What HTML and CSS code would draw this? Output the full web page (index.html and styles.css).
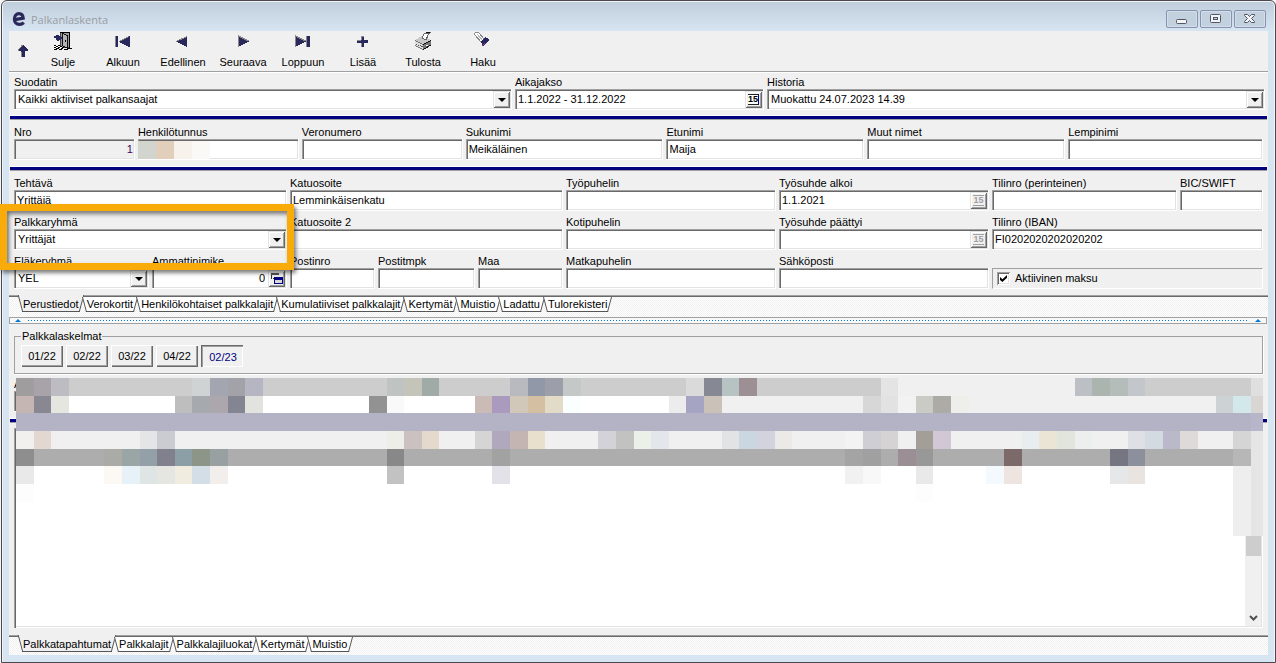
FILE: index.html
```html
<!DOCTYPE html>
<html lang="fi">

<head>
    <meta charset="UTF-8">
    <meta name="viewport" content="width=device-width, initial-scale=1.0">
    <link rel="stylesheet" href="styles.css">
    <title>Palkanlaskenta</title>
</head>

<body>
    <div class="window">
        <div class="titlebar">
            <svg class="logo" width="14" height="16" viewBox="0 0 14 16">
                <path d="M3 8.6 L11.2 7.2 C11 4.6 9.4 2.6 7 2.6 C4.2 2.6 2.4 5 2.4 8 C2.4 11.2 4.4 13.4 7.4 13.4 C9.2 13.4 10.6 12.8 11.8 11.6" fill="none" stroke="#28285a" stroke-width="3.2" />
            </svg>
            <h1>Palkanlaskenta</h1>
            <div class="winbuttons">
                <button aria-label="Pienennä">
                    <svg width="16" height="12" viewBox="0 0 16 12"><rect x="2.500" y="6.500" width="10" height="4" rx="1" fill="#f4f4f4" stroke="#4f5666" /></svg>
                </button>
                <button aria-label="Suurenna">
                    <svg width="16" height="12" viewBox="0 0 16 12"><rect x="2.500" y="1.500" width="10" height="8" rx="1" fill="#f4f4f4" stroke="#4f5666" /><rect x="5.500" y="4.500" width="4" height="2" fill="#c3d0de" stroke="#4f5666" /></svg>
                </button>
                <button aria-label="Sulje ikkuna">
                    <svg width="16" height="12" viewBox="0 0 16 12"><path d="M2.500 1.500h3L7.500 3.500l2-2h3v1L9.500 5.500l3 3v1h-3l-2-2-2 2h-3v-1l3-3-3-3z" fill="#f4f4f4" stroke="#4f5666" /></svg>
                </button>
            </div>
        </div>

        <div class="client">
            <div class="toolbar">
                <button class="up" aria-label="Ylös">
                    <svg width="12" height="14" viewBox="0 0 12 14"><path d="M6 0l5 6v1H8v6H4V7H1V6z" fill="#28285a" /><path d="M5.500 1L1 6.500M4 8v5" stroke="#888" fill="none" /></svg>
                </button>
                <button>
                    <svg width="20" height="20" viewBox="0 0 20 20">
                        <path d="M7 1h10v16H7z" fill="#444" />
                        <path d="M8 2h8v14H8z" fill="#9a9a9a" />
                        <path d="M9.500 2.500l5 2v13l-5-3z" fill="#b4b4b4" stroke="#111" />
                        <path d="M16.500 1v16M7 1.500h10" stroke="#000" fill="none" />
                        <path d="M12 9h1v2h-1z" fill="#000" />
                        <path d="M1 5h2V4h3v1h2v1h1v2H8v1H6v1H4V9H3V7H1z" fill="#28285a" />
                        <path d="M1 14.500h2m2 0h2M3 15.500h2m2 0h2M1 16.500h2m2 0h2m2 0h2M3 17.500h3m2 0h2m4 0h5M1 18.500h3m2 0h3m2 0h4" stroke="#000" />
                        <path d="M3 14.500h2M1 15.500h2m2 0h2M3 16.500h2m2 0h2" stroke="#fff" />
                    </svg>
                    Sulje
                </button>
                <button>
                    <svg width="20" height="20" viewBox="0 0 20 20"><path d="M2 5h2v11H2z" fill="#888" /><path d="M3 5h2v11H3zM17 5v11h-1L6 11v-1L16 5z" fill="#28285a" /><path d="M16 5.500L6 10.500" stroke="#888" /></svg>
                    Alkuun
                </button>
                <button>
                    <svg width="20" height="20" viewBox="0 0 20 20"><path d="M14 5v11L3 10.500z" fill="#28285a" /><path d="M14 5.500L3 10.500" stroke="#888" /></svg>
                    Edellinen
                </button>
                <button>
                    <svg width="20" height="20" viewBox="0 0 20 20"><path d="M5 5v11l11-5.500z" fill="#28285a" /><path d="M5.500 16V5l10 5" stroke="#888" fill="none" /></svg>
                    Seuraava
                </button>
                <button>
                    <svg width="20" height="20" viewBox="0 0 20 20"><path d="M2 5v11l11-5.500zM14 5h3v11h-3z" fill="#28285a" /><path d="M2.500 16V5l10 5M13.500 5v11" stroke="#888" fill="none" /></svg>
                    Loppuun
                </button>
                <button>
                    <svg width="20" height="20" viewBox="0 0 20 20"><path d="M8 5h3v4h4v3h-4v4H8v-4H4V9h4z" fill="#28285a" /><path d="M8.500 9V5h2M4 9.500h4M8.500 12v4" stroke="#888" fill="none" /></svg>
                    Lisää
                </button>
                <button>
                    <svg width="20" height="20" viewBox="0 0 20 20">
                        <path d="M2 9l7-4 9 4v5l-8 5-8-4z" fill="#777" />
                        <path d="M2 9l7-4 9 4-8 4z" fill="#c8c8c8" />
                        <path d="M2 10l8 4v4l-8-4z" fill="#ddd" />
                        <path d="M9 7l2-4 6-1-2 2-2 5z" fill="#fff" stroke="#666" />
                        <path d="M10 18.500l8-4.500M10 13.500l8-4M13 2l4-1" stroke="#111" />
                        <path d="M3 13l7 3" stroke="#555" stroke-dasharray="1 1" />
                        <path d="M13 14h2" stroke="#fff" />
                    </svg>
                    Tulosta
                </button>
                <button>
                    <svg width="20" height="20" viewBox="0 0 20 20">
                        <path d="M1 3l2-2h2l7 8-3 3z" fill="#fff" stroke="#888" />
                        <path d="M4 3l6 7" stroke="#bbb" />
                        <path d="M7 11l5-5 4 2v1l-6 6H9v-2z" fill="#28285a" />
                        <path d="M9 14.500l3-2" stroke="#a03a8a" />
                    </svg>
                    Haku
                </button>
            </div>

            <div class="row filters">
                <div class="cell">
                    <label for="suodatin">Suodatin</label>
                    <div class="box">
                        <select id="suodatin"><option>Kaikki aktiiviset palkansaajat</option></select>
                        <span class="drop"></span>
                    </div>
                </div>
                <div class="cell">
                    <label for="aikajakso">Aikajakso</label>
                    <div class="box">
                        <input type="text" id="aikajakso" value="1.1.2022 - 31.12.2022">
                        <button class="cal" aria-label="Valitse aikajakso"><span>15</span></button>
                    </div>
                </div>
                <div class="cell">
                    <label for="historia">Historia</label>
                    <div class="box">
                        <select id="historia"><option>Muokattu 24.07.2023 14.39</option></select>
                        <span class="drop"></span>
                    </div>
                </div>
            </div>

            <div class="bar"></div>

            <div class="row person">
                <div class="cell">
                    <label for="nro">Nro</label>
                    <div class="box readonly"><input type="text" id="nro" class="right" value="1" readonly></div>
                </div>
                <div class="cell">
                    <label for="hetu">Henkilötunnus</label>
                    <div class="box"><input type="text" id="hetu"></div>
                    <div class="hide"><i class="h1"></i><i class="h2"></i><i class="h3"></i><i class="h4"></i></div>
                </div>
                <div class="cell">
                    <label for="veronumero">Veronumero</label>
                    <div class="box"><input type="text" id="veronumero"></div>
                </div>
                <div class="cell">
                    <label for="sukunimi">Sukunimi</label>
                    <div class="box"><input type="text" id="sukunimi" value="Meikäläinen"></div>
                </div>
                <div class="cell">
                    <label for="etunimi">Etunimi</label>
                    <div class="box"><input type="text" id="etunimi" value="Maija"></div>
                </div>
                <div class="cell">
                    <label for="muut">Muut nimet</label>
                    <div class="box"><input type="text" id="muut"></div>
                </div>
                <div class="cell">
                    <label for="lempinimi">Lempinimi</label>
                    <div class="box"><input type="text" id="lempinimi"></div>
                </div>
            </div>

            <div class="bar"></div>

            <div class="row details">
                <div class="cell two">
                    <label for="tehtava">Tehtävä</label>
                    <div class="box"><input type="text" id="tehtava" value="Yrittäjä"></div>
                </div>
                <div class="cell three">
                    <label for="katu">Katuosoite</label>
                    <div class="box"><input type="text" id="katu" value="Lemminkäisenkatu"></div>
                </div>
                <div class="cell">
                    <label for="tyopuhelin">Työpuhelin</label>
                    <div class="box"><input type="text" id="tyopuhelin"></div>
                </div>
                <div class="cell">
                    <label for="alkoi">Työsuhde alkoi</label>
                    <div class="box">
                        <input type="text" id="alkoi" value="1.1.2021">
                        <button class="cal off" aria-label="Valitse alkupäivä" disabled><span>15</span></button>
                    </div>
                </div>
                <div class="cell">
                    <label for="tilinro">Tilinro (perinteinen)</label>
                    <div class="box"><input type="text" id="tilinro"></div>
                </div>
                <div class="cell">
                    <label for="bic">BIC/SWIFT</label>
                    <div class="box"><input type="text" id="bic"></div>
                </div>

                <div class="cell two">
                    <label for="palkkaryhma">Palkkaryhmä</label>
                    <div class="box">
                        <select id="palkkaryhma"><option>Yrittäjät</option></select>
                        <span class="drop"></span>
                    </div>
                    <div class="highlight"></div>
                </div>
                <div class="cell three">
                    <label for="katu2">Katuosoite 2</label>
                    <div class="box"><input type="text" id="katu2"></div>
                </div>
                <div class="cell">
                    <label for="kotipuhelin">Kotipuhelin</label>
                    <div class="box"><input type="text" id="kotipuhelin"></div>
                </div>
                <div class="cell">
                    <label for="paattyi">Työsuhde päättyi</label>
                    <div class="box">
                        <input type="text" id="paattyi">
                        <button class="cal off" aria-label="Valitse loppupäivä" disabled><span>15</span></button>
                    </div>
                </div>
                <div class="cell two">
                    <label for="iban">Tilinro (IBAN)</label>
                    <div class="box"><input type="text" id="iban" value="FI0202020202020202"></div>
                </div>

                <div class="cell">
                    <label for="elakeryhma">Eläkeryhmä</label>
                    <div class="box">
                        <select id="elakeryhma"><option>YEL</option></select>
                        <span class="drop"></span>
                    </div>
                </div>
                <div class="cell">
                    <label for="ammatti">Ammattinimike</label>
                    <div class="box">
                        <input type="text" id="ammatti" class="right" value="0">
                        <button class="pick" aria-label="Valitse ammattinimike">
                            <svg width="13" height="13" viewBox="0 0 13 13"><path d="M1 1h8v2H1z" fill="#555" /><path d="M1 3h1v4H1zM3 6h1v1H3z" fill="#333" /><path d="M4 5h9v7H4z" fill="#000080" /><path d="M5 8h7v3H5z" fill="#d8d8d8" /></svg>
                        </button>
                    </div>
                </div>
                <div class="cell">
                    <label for="postinro">Postinro</label>
                    <div class="box"><input type="text" id="postinro"></div>
                </div>
                <div class="cell">
                    <label for="postitmpk">Postitmpk</label>
                    <div class="box"><input type="text" id="postitmpk"></div>
                </div>
                <div class="cell">
                    <label for="maa">Maa</label>
                    <div class="box"><input type="text" id="maa"></div>
                </div>
                <div class="cell">
                    <label for="matkapuhelin">Matkapuhelin</label>
                    <div class="box"><input type="text" id="matkapuhelin"></div>
                </div>
                <div class="cell">
                    <label for="email">Sähköposti</label>
                    <div class="box"><input type="text" id="email"></div>
                </div>
                <div class="cell two bottom">
                    <div class="checkpanel">
                        <input type="checkbox" id="aktiivinen" checked>
                        <label for="aktiivinen">Aktiivinen maksu</label>
                    </div>
                </div>
            </div>

            <div class="tabs">
                <button class="active"><span>Perustiedot</span></button>
                <button><span>Verokortit</span></button>
                <button><span>Henkilökohtaiset palkkalajit</span></button>
                <button><span>Kumulatiiviset palkkalajit</span></button>
                <button><span>Kertymät</span></button>
                <button><span>Muistio</span></button>
                <button><span>Ladattu</span></button>
                <button><span>Tulorekisteri</span></button>
            </div>

            <div class="splitter"><i class="tri"></i><i class="dots"></i><i class="tri"></i></div>

            <fieldset class="periods">
                <legend>Palkkalaskelmat</legend>
                <button>01/22</button>
                <button>02/22</button>
                <button>03/22</button>
                <button>04/22</button>
                <button class="pressed">02/23</button>
            </fieldset>

            <div class="events">
                <div class="row single">
                    <div class="cell">
                        <label for="rivi">A</label>
                        <div class="box"><input type="text" id="rivi"></div>
                    </div>
                </div>
                <div class="bar"></div>
                <div class="list">
                    <div class="scroll">
                        <div class="thumb"></div>
                        <svg width="9" height="6" viewBox="0 0 9 6"><path d="M1 1l3.500 3.500L8 1" fill="none" stroke="#505050" stroke-width="2" /></svg>
                    </div>
                </div>
                <svg id="mosaic" class="mosaic" viewBox="0 0 70.680 8.950" preserveAspectRatio="none"></svg>
            </div>

            <div class="tabs low">
                <button class="active"><span>Palkkatapahtumat</span></button>
                <button><span>Palkkalajit</span></button>
                <button><span>Palkkalajiluokat</span></button>
                <button><span>Kertymät</span></button>
                <button><span>Muistio</span></button>
            </div>
        </div>
    </div>

    <script src="mosaic.js"></script>
</body>

</html>
```

FILE: styles.css
```css
* {
    box-sizing: border-box;
    margin: 0;
    padding: 0;
}

body {
    height: 100vh;
    padding-left: 1px;
    background-color: #f4f4f4;
    font-family: "Liberation Sans", Arial, sans-serif;
    font-size: 11px;
    line-height: 13px;
    color: black;
}

button,
input,
select {
    font: inherit;
    color: inherit;
    border: none;
    background: none;
    outline: none;
}

.window {
    height: 100%;
    min-height: 560px;
    display: flex;
    flex-direction: column;
    padding: 0 7px 7px 7px;
    border: 1px solid #4b484e;
    border-radius: 6px 6px 0 0;
    background: linear-gradient(#c0cddb, #d7e4f2 30px);
    box-shadow: inset 0 1px #f0f4f8, inset 1px 0 #f0f4f8, inset -1px 0 #f0f4f8;
}

.titlebar {
    height: 30px;
    flex: none;
    display: flex;
    align-items: center;
    padding: 6px 2px 0 3px;
}

.titlebar h1 {
    flex: 1;
    margin-left: 5px;
    font-family: "Open Sans", "Noto Sans", sans-serif;
    font-size: 11px;
    font-weight: normal;
    color: #999da3;
}

.winbuttons {
    display: flex;
    gap: 2px;
}

.winbuttons button {
    width: 32px;
    height: 18px;
    display: flex;
    align-items: center;
    justify-content: center;
    border: 1px solid #8493b0;
    border-radius: 2px;
    background-color: #c3d0de;
    box-shadow: inset 0 0 0 1px #d3deea;
}

.client {
    flex: 1;
    display: flex;
    flex-direction: column;
    background-color: #f0f0f0;
}

/* toolbar */
.toolbar {
    height: 42px;
    flex: none;
    display: flex;
    border-bottom: 1px solid white;
    box-shadow: inset 0 -1px #a0a0a0;
}

.toolbar button {
    width: 60px;
    display: flex;
    flex-direction: column;
    align-items: center;
    gap: 5px;
}

.toolbar svg {
    shape-rendering: crispEdges;
}

.toolbar .up {
    width: 24px;
    padding: 13px 0 0 3px;
}

/* fields */
.row {
    flex: none;
    display: grid;
    gap: 5px 3px;
    padding: 6px 5px;
}

.filters {
    grid-template-columns: 498fr 249fr 498fr;
    padding: 3px 3px 5px 5px;
}

.person {
    grid-template-columns: 121fr 161fr 161fr 198fr 198fr 198fr 195fr;
}

.details {
    grid-template-columns: 135fr 135fr 85fr 97fr 85fr 210fr 210fr 185fr 83fr;
}

.cell {
    position: relative;
    min-width: 0;
}

.cell label {
    display: block;
    height: 13px;
    white-space: nowrap;
}

.two {
    grid-column: span 2;
}

.three {
    grid-column: span 3;
}

.box {
    height: 21px;
    display: flex;
    padding: 2px 1px 1px 2px;
    border-right: 1px solid white;
    border-bottom: 1px solid white;
    background-color: white;
    box-shadow: inset 1px 1px #a0a0a0, inset 2px 2px #696969, inset -1px -1px #e3e3e3;
}

.box input,
.box select {
    flex: 1;
    min-width: 0;
    width: 100%;
    height: 16px;
    padding: 0 1px;
    appearance: none;
}

.box select {
    padding-left: 2px;
}

.box .right {
    padding-right: 0;
    text-align: right;
}

.readonly {
    background-color: #f0f0f0;
    color: #400060;
}

.drop,
.cal,
.pick {
    width: 17px;
    height: 17px;
    flex: none;
    display: flex;
    align-items: center;
    justify-content: center;
    background-color: #f0f0f0;
    box-shadow: inset 1px 1px #e3e3e3, inset -1px -1px #696969, inset 2px 2px white, inset -2px -2px #a0a0a0;
}

.drop::before {
    content: "";
    border: 4px solid transparent;
    border-top-color: black;
    border-bottom: none;
}

.cal span {
    width: 11px;
    height: 11px;
    border-top: 1px solid #222;
    border-bottom: 1px solid #222;
    border-right: 1px solid #000080;
    font-size: 9px;
    font-weight: bold;
    line-height: 9px;
    background-color: white;
}

.cal.off span {
    border-right: none;
    border-color: #a0a0a0;
    color: #a0a0a0;
    background-color: transparent;
}

.pick {
    margin-left: 3px;
}

.bar {
    flex: none;
    height: 5px;
    margin: 0 1px;
    border-top: 1px solid white;
    border-bottom: 1px solid #a0a0a0;
    background-color: #000080;
}

.hide {
    position: absolute;
    left: 0;
    bottom: 1px;
    height: 18px;
    display: flex;
}

.hide i {
    width: 18px;
}

.h1 {
    background-color: #d2d4ce;
}

.h2 {
    background-color: #e2cfbb;
}

.h3 {
    background-color: #f8f2ed;
}

.h4 {
    background-color: #fbf9f5;
}

.bottom {
    display: flex;
    align-items: flex-end;
}

.checkpanel {
    flex: 1;
    height: 21px;
    display: flex;
    align-items: center;
    gap: 5px;
    padding-left: 4px;
    border: 1px solid white;
    border-top-color: #a0a0a0;
    border-left-color: #a0a0a0;
}

.checkpanel input {
    appearance: none;
    width: 13px;
    height: 13px;
    background-color: white;
    box-shadow: inset 1px 1px #a0a0a0, inset -1px -1px white, inset 2px 2px #696969, inset -2px -2px #e3e3e3;
}

.checkpanel input:checked::before {
    content: "";
    display: block;
    width: 7px;
    height: 7px;
    margin: 3px;
    background-color: black;
    clip-path: polygon(0 30%, 35% 60%, 100% 0, 100% 40%, 35% 100%, 0 70%);
}

/* marker around the salary group */
.highlight {
    position: absolute;
    top: -12px;
    right: -7px;
    bottom: -20px;
    left: -14px;
    z-index: 2;
    border: 7px solid #f9ab0a;
    box-shadow: 2px 3px 4px rgba(0, 0, 0, 0.5), inset 2px 3px 4px rgba(0, 0, 0, 0.5);
    pointer-events: none;
}

/* tabs */
.tabs {
    flex: none;
    height: 22px;
    display: flex;
    align-items: flex-start;
    padding-left: 10px;
    border-top: 1px solid #a0a0a0;
    box-shadow: inset 0 1px #696969;
    background: repeating-conic-gradient(#f0f0f0 0 25%, white 0 50%) 0 0 / 2px 2px;
}

.tabs.low {
    height: 20px;
}

.tabs button {
    position: relative;
    height: 16px;
    padding: 0 4px;
}

.tabs button::before,
.tabs button::after {
    content: "";
    position: absolute;
    top: 1px;
    bottom: 0;
    background-color: white;
    border-bottom: 1px solid #555;
}

.tabs button::before {
    left: 1px;
    right: 45%;
    border-left: 1px solid #555;
    transform: skewX(15deg);
}

.tabs button::after {
    left: 45%;
    right: 1px;
    border-right: 1px solid #555;
    transform: skewX(-15deg);
}

.tabs .active::before,
.tabs .active::after {
    top: -1px;
    background-color: #f0f0f0;
}

.tabs span {
    position: relative;
    z-index: 1;
    white-space: nowrap;
}

.splitter {
    flex: none;
    height: 7px;
    margin: 0 1px 0 0;
    display: flex;
    align-items: center;
    gap: 7px;
    padding: 0 5px;
    border: 1px solid #a0a0a0;
    background-color: #f8f8f8;
}

.tri {
    border: 3px solid transparent;
    border-bottom-color: #0078d7;
    border-top: none;
}

.dots {
    flex: 1;
    height: 1px;
    background: linear-gradient(90deg, #0078d7 1px, transparent 1px) 0 0 / 3px 1px;
}

.periods {
    flex: none;
    display: flex;
    gap: 3px;
    margin: 6px 5px 0;
    padding: 2px 6px 6px;
    border: 1px solid #a0a0a0;
    box-shadow: 0 1px white, 1px 0 white;
}

.periods legend {
    height: 13px;
    padding: 0 1px;
}

.periods button {
    width: 42px;
    height: 22px;
    box-shadow: inset 1px 1px white, inset -1px -1px #696969, inset -2px -2px #a0a0a0;
}

.periods .pressed {
    padding: 2px 0 0 2px;
    color: #000080;
    box-shadow: inset 1px 1px #696969, inset 2px 2px #a0a0a0, inset -1px -1px white;
}

/* event list */
.events {
    flex: 1;
    position: relative;
    display: flex;
    flex-direction: column;
    padding-bottom: 7px;
}

.single {
    padding-top: 4px;
}

.list {
    flex: 1;
    display: flex;
    justify-content: flex-end;
    margin: 5px 5px 0;
    padding: 2px;
    background-color: white;
    box-shadow: inset 1px 1px #a0a0a0, inset 2px 2px #696969, inset -1px -1px white, inset -2px -2px #e3e3e3;
}

.scroll {
    width: 16px;
    display: flex;
    flex-direction: column;
    align-items: center;
    justify-content: space-between;
    padding-bottom: 5px;
    background-color: #f0f0f0;
}

.thumb {
    width: 15px;
    height: 66%;
    background-color: #cdcdcd;
}

.mosaic {
    position: absolute;
    top: 4px;
    left: 7px;
    width: calc(100% - 12px);
    height: 158px;
    shape-rendering: crispEdges;
}
```

FILE: mosaic.js
```javascript
// each row: [column, colour] or [column, colour, how many columns]
const rows = [
    [[0, "#cdcdcd", 49], [0, "#9f9d9d"], [1, "#a8a3a9"], [2, "#bdbcc2"], [10, "#cfd3d4"], [11, "#a3a6b0"], [12, "#a3a2a8"], [13, "#b6b6c2"],
     [21, "#bfc3c1"], [22, "#c5c4ba"], [23, "#a0aaa7"], [28, "#b9babf"], [29, "#9199a8"], [30, "#9c9ea9"], [31, "#c4c8c7"],
     [38, "#dadada"], [39, "#868893"], [40, "#b7c3c3"], [41, "#9c9095"], [49, "#e4e4e4"], [50, "#f0f0f0", 10],
     [60, "#bcc0c5"], [61, "#abb4ae"], [62, "#b4bdb9"], [63, "#c3c7cb"], [64, "#cdcdcd", 6], [70, "#dfdfdf"]],
    [[0, "#ffffff", 37], [0, "#c5b5b3"], [1, "#898892"], [2, "#e6e6e1"], [9, "#bebebe"], [10, "#a6a9ae"], [11, "#aca6ad"], [12, "#838592"], [13, "#e2e3de"],
     [20, "#929292"], [21, "#f9f9f9"], [26, "#cbbbb7"], [27, "#a99abe"], [28, "#d2c8b9"], [29, "#d5bfa3"], [30, "#e1dbc8"], [31, "#fafefe"],
     [37, "#ececec"], [38, "#a5a5c3"], [39, "#cac1b9"], [40, "#f0f0f0", 31], [48, "#d7d7d7"], [49, "#e2e2e2"], [50, "#f2f2f2"],
     [51, "#cacbc5"], [52, "#acaba5"], [53, "#eeeeeb"], [68, "#cdd2d5"], [69, "#d3e8ea"], [70, "#d9d5d2"]],
    [[0, "#b4b3c5", 70], [70, "#b7b5ca"]],
    [[0, "#f0f0f0", 70], [0, "#f1f0ee"], [1, "#e2d7d1"], [7, "#e4e5e7"], [8, "#cbccd2"], [21, "#eeeee9"], [22, "#cbc1c0"], [23, "#e3d9cd"],
     [26, "#d5d5d5"], [27, "#b0a9bd"], [28, "#c4b5b3"], [29, "#e9dfcd"], [33, "#d2d2d8"], [34, "#c2c2c0"], [35, "#ebf0e9"], [36, "#e3e6eb"],
     [40, "#e1e4e4"], [41, "#cbd7e0"], [42, "#d3d3dd"], [43, "#ebeae6"], [47, "#f3f3f3"], [48, "#cfced4"], [49, "#d5d3d4"],
     [51, "#a49e98"], [52, "#d2c7d5"], [57, "#e8edf0"], [58, "#ebe5d5"], [59, "#e2e5dd"], [60, "#ebf0ef"],
     [63, "#dfe0e5"], [64, "#d3dae1"], [65, "#b9b9ca"], [66, "#dedad7"], [69, "#d5d5d5"], [70, "#e5e5e5"]],
    [[0, "#adadad", 70], [0, "#8e8e8e"], [5, "#aaaba7"], [6, "#9aa6a5"], [7, "#94a0a7"], [8, "#80818c"], [9, "#8d9fa6"], [10, "#8d9488"], [11, "#98a0a1"],
     [21, "#888888"], [27, "#a2a2a3"], [47, "#a4a4a4"], [48, "#a0a0a0"], [50, "#9b8e94"], [51, "#989898"], [56, "#7c6969"],
     [62, "#767682"], [63, "#8c909d"], [69, "#b7b7b7"], [70, "#e5e5e5"]],
    [[0, "#e9e9e9"], [5, "#fcf8f3"], [6, "#e6f1f8"], [7, "#dfe5e5"], [8, "#e5e5e2"], [9, "#f0ece0"], [10, "#d4dee7"], [11, "#f1eeec"],
     [21, "#c2c2c2"], [27, "#e3e2e8"], [47, "#f1f1f1"], [48, "#f8f8f8"], [51, "#e9e9e9"], [55, "#f4f9fd"], [56, "#eee5e0"],
     [62, "#e6e7e9"], [63, "#eae4e0"], [69, "#eeeeee"], [70, "#e5e5e5"]],
    [[0, "#fdfdfd"], [51, "#fdfdfd"], [69, "#eeeeee"], [70, "#e5e5e5"]],
    [[69, "#eeeeee"], [70, "#e5e5e5"]],
    [[69, "#eeeeee"], [70, "#e5e5e5"]]
];

const mosaic = document.getElementById("mosaic");
rows.forEach((row, y) => {
    row.forEach(([x, color, span = 1]) => {
        const rect = document.createElementNS("http://www.w3.org/2000/svg", "rect");
        rect.setAttribute("x", x);
        rect.setAttribute("y", y);
        rect.setAttribute("width", span);
        rect.setAttribute("height", 1);
        rect.setAttribute("fill", color);
        mosaic.appendChild(rect);
    });
});
```
